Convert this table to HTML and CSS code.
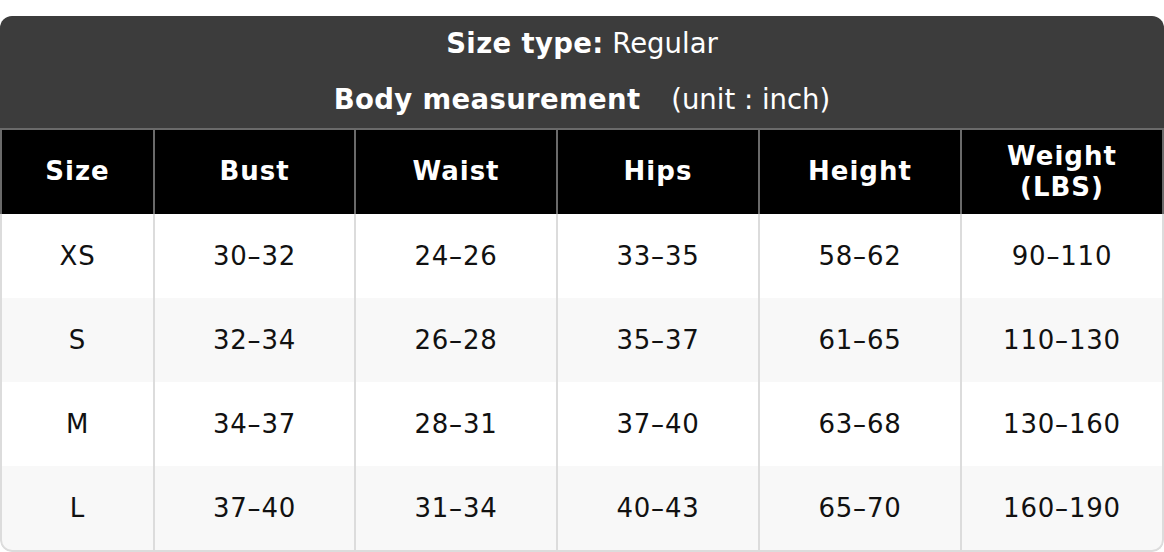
FILE: index.html
```html
<!DOCTYPE html>
<html lang="en">
<head>
<meta charset="utf-8">
<title>Size chart</title>
<link rel="stylesheet" href="styles.css">
</head>
<body>
<div class="chart">
  <div class="caption">
    <div class="caption-line"><strong>Size type:</strong> Regular</div>
    <div class="caption-line"><strong>Body measurement</strong> <span class="unit">(unit : inch)</span></div>
  </div>
  <table class="sizes">
    <colgroup>
      <col class="col-size">
      <col class="col-bust">
      <col class="col-mid">
      <col class="col-mid">
      <col class="col-mid">
      <col class="col-last">
    </colgroup>
    <thead>
      <tr>
        <th>Size</th>
        <th>Bust</th>
        <th>Waist</th>
        <th>Hips</th>
        <th>Height</th>
        <th>Weight (LBS)</th>
      </tr>
    </thead>
    <tbody>
      <tr><td>XS</td><td>30–32</td><td>24–26</td><td>33–35</td><td>58–62</td><td>90–110</td></tr>
      <tr><td>S</td><td>32–34</td><td>26–28</td><td>35–37</td><td>61–65</td><td>110–130</td></tr>
      <tr><td>M</td><td>34–37</td><td>28–31</td><td>37–40</td><td>63–68</td><td>130–160</td></tr>
      <tr><td>L</td><td>37–40</td><td>31–34</td><td>40–43</td><td>65–70</td><td>160–190</td></tr>
    </tbody>
  </table>
</div>
</body>
</html>
```
FILE: styles.css
```css
html, body {
  margin: 0;
  padding: 0;
  background: #fff;
}

body {
  padding-top: 16px;
  font-family: "DejaVu Sans", sans-serif;
  color: #111;
}

.chart {
  border-radius: 12px;
  overflow: hidden;
}

.caption {
  background: #3c3c3c;
  color: #fff;
  text-align: center;
  font-size: 27.5px;
}

.caption-line {
  height: 56px;
  line-height: 54px;
}

.caption strong {
  font-weight: bold;
  letter-spacing: 0.35px;
}

.unit {
  margin-left: 22px;
}

.sizes {
  width: 100%;
  table-layout: fixed;
  border-collapse: separate;
  border-spacing: 0;
  font-size: 26px;
  letter-spacing: 0.8px;
}

.col-size { width: 155px; }
.col-bust { width: 201px; }
.col-mid { width: 202px; }
.col-last { width: 202px; }

.sizes th,
.sizes td {
  padding: 0 8px;
  text-align: center;
  box-sizing: border-box;
}

.sizes th {
  background: #000;
  color: #fff;
  font-weight: bold;
  letter-spacing: 1px;
  line-height: 1.2;
  height: 86px;
  border-top: 2px solid #6a6a6a;
  border-right: 2px solid #6a6a6a;
}

.sizes th:first-child {
  border-left: 2px solid #6a6a6a;
}

.sizes td {
  height: 84px;
  font-weight: normal;
  border-right: 2px solid #dcdcdc;
}

.sizes td:first-child {
  border-left: 2px solid #dcdcdc;
}

.sizes tbody tr:nth-child(even) td {
  background: #f8f8f8;
}

.sizes tbody tr:last-child td {
  height: 86px;
  border-bottom: 2px solid #dcdcdc;
}

.sizes tbody tr:last-child td:first-child {
  border-bottom-left-radius: 12px;
}

.sizes tbody tr:last-child td:last-child {
  border-bottom-right-radius: 12px;
}
```
